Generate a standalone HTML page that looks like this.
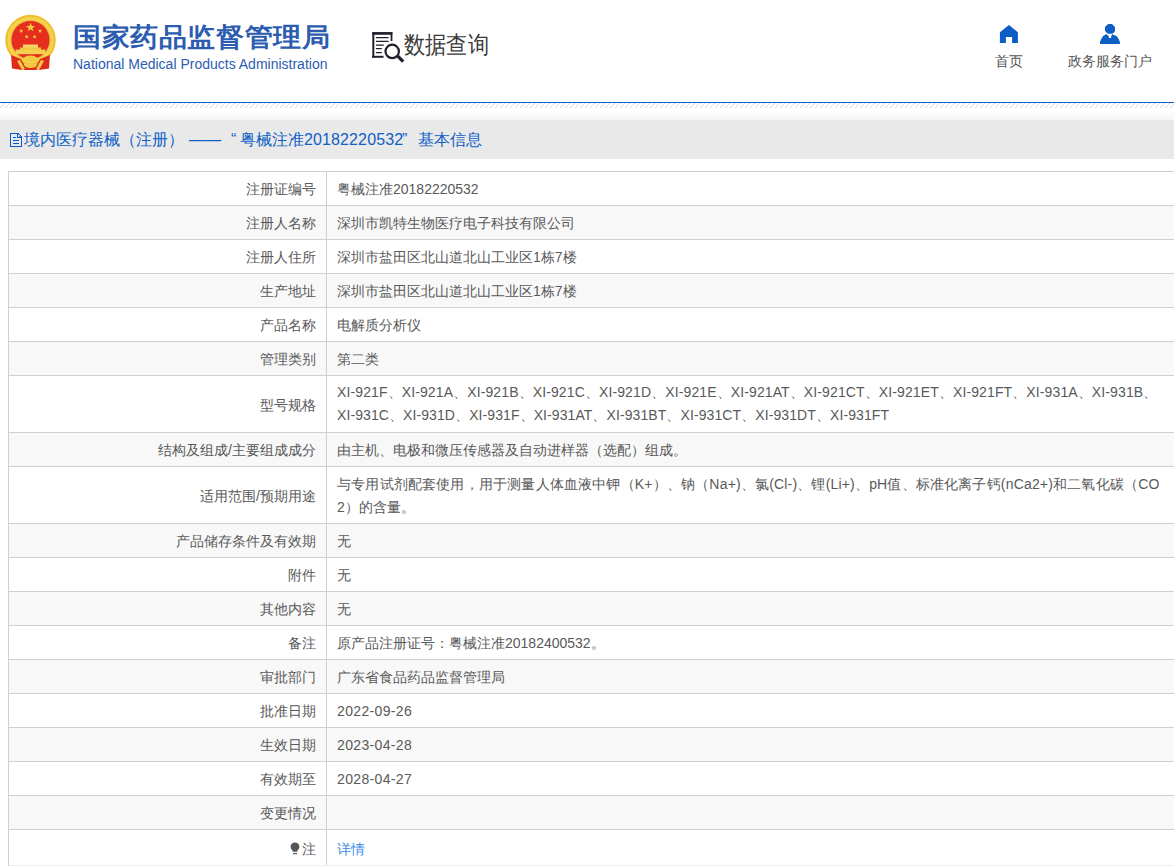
<!DOCTYPE html>
<html><head><meta charset="utf-8">
<style>
*{margin:0;padding:0;box-sizing:border-box}
html,body{width:1174px;height:866px;overflow:hidden;background:#fff}
body{font-family:"Liberation Sans",sans-serif;position:relative}
.abs{position:absolute}
#emblem{left:0;top:10px;width:70px;height:70px}
#t1{left:73px;top:18px;font-size:28px;font-weight:bold;color:#2b5cb0;white-space:nowrap;line-height:38px;letter-spacing:0.6px;transform:scaleY(0.93);transform-origin:0 31px}
#t2{left:73px;top:55px;font-size:14px;color:#2d5db0;white-space:nowrap;line-height:18px}
#dq{left:366px;top:26px;width:44px;height:42px}
#dqt{left:403.5px;top:28px;font-size:24px;color:#3a3a3a;white-space:nowrap;line-height:34px;transform:scaleX(0.885);transform-origin:0 0}
.nav{position:absolute;font-size:14px;color:#555;line-height:20px;white-space:nowrap}
#blue{left:0;top:102px;width:1174px;height:1px;background:#0a61c6}
#hatch{left:0;top:103px;width:1174px;height:5px}
#grad{left:0;top:111px;width:1174px;height:9px;background:linear-gradient(#fff,#f5f5f5)}
#bar{left:0;top:120px;width:1174px;height:39px;background:#e9e9e9;border-bottom:1px solid #e7e9f0}
.bart{top:128px;font-size:16px;color:#0f5fc7;white-space:nowrap;line-height:24px}
#doc{left:10px;top:133px;width:12px;height:14px}
table{position:absolute;left:8px;top:171px;width:1300px;border-collapse:collapse;font-size:14px;color:#595959}
td{border:1px solid #d1cfd1;line-height:23px;padding:6px 10px 4px 10px}
td.l{width:318px;text-align:right;padding-right:10px}
tr:nth-child(even) td{background:#f8f8f8}
a{color:#3a8ee6;text-decoration:none}
tr.last td{padding-top:8px;padding-bottom:6px}
</style></head><body>

<svg id="emblem" class="abs" viewBox="0 10 70 70">
  <circle cx="30.5" cy="40" r="25.2" fill="#f0bd2a"/>
  <circle cx="30.5" cy="40" r="23.2" fill="#f6d24e"/>
  <circle cx="30.5" cy="40" r="20" fill="#e6b83a"/>
  <circle cx="30.5" cy="40" r="19" fill="#e52d20"/>
  <rect x="23" y="44.5" width="15" height="3.5" fill="#f7d566"/>
  <rect x="20" y="47.5" width="21" height="2.5" fill="#f1c640"/>
  <rect x="15.5" y="49.6" width="30" height="4.6" fill="#f4cf52"/>
  <path d="M11 55 L21 59 L25 66 L22 70 L12 68.5 Z" fill="#e02a1c"/>
  <path d="M50 55 L40 59 L36 66 L39 70 L49 68.5 Z" fill="#e02a1c"/>
  <path d="M22 65 L39 65 L37 70 L24 70 Z" fill="#e02a1c"/>
  <ellipse cx="30.5" cy="58.5" rx="7" ry="3" fill="#f3c843"/>
  <ellipse cx="30.5" cy="65.5" rx="6" ry="2.6" fill="#f3c843"/>
  <path d="M17 61 L20 60 L25 69 L22 70 Z M44 61 L41 60 L36 69 L39 70 Z" fill="#f3c843"/>
  <polygon points="30.6,22.5 31.8,25.9 35.3,25.9 32.5,28 33.5,31.3 30.6,29.3 27.7,31.3 28.7,28 25.9,25.9 29.4,25.9" fill="#f2cf3a"/>
  <polygon points="21.2,28.8 21.8,30.3 23.3,30.3 22.1,31.3 22.5,32.8 21.2,31.9 19.9,32.8 20.3,31.3 19.1,30.3 20.6,30.3" fill="#f2cf3a"/>
  <polygon points="40,28.8 40.6,30.3 42.1,30.3 40.9,31.3 41.3,32.8 40,31.9 38.7,32.8 39.1,31.3 37.9,30.3 39.4,30.3" fill="#f2cf3a"/>
  <polygon points="26.7,34.6 27.3,36.1 28.8,36.1 27.6,37.1 28,38.6 26.7,37.7 25.4,38.6 25.8,37.1 24.6,36.1 26.1,36.1" fill="#f2cf3a"/>
  <polygon points="34.6,34.6 35.2,36.1 36.7,36.1 35.5,37.1 35.9,38.6 34.6,37.7 33.3,38.6 33.7,37.1 32.5,36.1 34,36.1" fill="#f2cf3a"/>
</svg>
<div id="t1" class="abs">国家药品监督管理局</div>
<div id="t2" class="abs">National Medical Products Administration</div>

<svg id="dq" class="abs" viewBox="0 0 44 42">
  <path d="M6.3 7.4 H26.4" stroke="#1f1f2e" stroke-width="2.7"/>
  <path d="M7.3 6.3 V31.8" stroke="#1f1f2e" stroke-width="2"/>
  <path d="M25.5 6.3 V15" stroke="#1f1f2e" stroke-width="1.8"/>
  <path d="M6.3 30.8 H17.5" stroke="#1f1f2e" stroke-width="2"/>
  <path d="M9.9 11.6 H22.6 M9.9 15.4 H22.6 M9.9 19.1 H17.7 M9.9 22.7 H15.8 M9.9 26.6 H15.8" stroke="#1f1f2e" stroke-width="1.3"/>
  <circle cx="26.2" cy="25.4" r="6.7" fill="none" stroke="#1f1f2e" stroke-width="2.2"/>
  <path d="M31.8 30.1 L37.2 35.7" stroke="#1f1f2e" stroke-width="3.2"/>
</svg>
<div id="dqt" class="abs">数据查询</div>

<svg class="abs" style="left:990px;top:18px" width="40" height="32" viewBox="0 0 40 32"><path d="M19 6.9 L27.9 14.3 V24.9 H22.1 V18.9 H15.9 V24.9 H9.9 V14.3 Z" fill="#0d5ec4"/></svg>
<div class="nav" style="left:995px;top:51px">首页</div>
<svg class="abs" style="left:1090px;top:18px" width="40" height="32" viewBox="0 0 40 32"><path d="M18.1 5.9 H22 L25 9.1 V12.9 L23.8 14.8 L22 15.7 H18.1 L15.9 13.9 L15 12.2 V9.1 Z" fill="#0d5ec4"/><path d="M16.5 15.9 L18.9 18.5 V20.1 H21.1 V18.5 L22.2 15.9 L23.7 17 L26.6 18.1 L28.8 21.3 L29.9 24 V25.9 H10 V24 L11.1 21.3 L13.1 18.1 Z" fill="#0d5ec4"/></svg>
<div class="nav" style="left:1068px;top:50.5px">政务服务门户</div>

<div id="blue" class="abs"></div>
<svg id="hatch" class="abs" width="1174" height="5">
  <defs><pattern id="hp" width="5" height="5" patternUnits="userSpaceOnUse">
    <rect x="0" y="4" width="1" height="1" fill="#d6d6d6"/>
    <rect x="1" y="3" width="1" height="1" fill="#d6d6d6"/>
    <rect x="2" y="2" width="1" height="1" fill="#d6d6d6"/>
    <rect x="3" y="1" width="1" height="1" fill="#e6e0d8"/>
    <rect x="4" y="0" width="1" height="1" fill="#c8d4e4"/>
  </pattern></defs>
  <rect width="1174" height="5" fill="url(#hp)"/>
</svg>
<div id="grad" class="abs"></div>
<div id="bar" class="abs"></div>
<svg id="doc" class="abs" width="12" height="14" viewBox="0 0 12 14" shape-rendering="crispEdges" fill="#0a5cc8"><rect x="0" y="0" width="1" height="14"/><rect x="11" y="3" width="1" height="11"/><rect x="0" y="0" width="8" height="1"/><rect x="0" y="13" width="12" height="1"/><rect x="8" y="0" width="1" height="1"/><rect x="9" y="1" width="1" height="1"/><rect x="10" y="2" width="1" height="1"/><rect x="7" y="1" width="1" height="4"/><rect x="7" y="4" width="5" height="1"/><rect x="8" y="1" width="1" height="1" opacity="0.6"/><rect x="9" y="3" width="2" height="1" opacity="0.6"/><rect x="3" y="4" width="3" height="1"/><rect x="3" y="7" width="6" height="1"/><rect x="3" y="10" width="6" height="1"/></svg>
<div class="bart abs" style="left:24px">境内医疗器械（注册）</div>
<div class="bart abs" style="left:189px">——</div>
<div class="bart abs" style="left:231px">“</div>
<div class="bart abs" style="left:240px">粤械注准<span style="letter-spacing:0.12px">20182220532</span></div>
<div class="bart abs" style="left:402px">”</div>
<div class="bart abs" style="left:418px">基本信息</div>

<table>
<tr><td class="l">注册证编号</td><td>粤械注准20182220532</td></tr>
<tr><td class="l">注册人名称</td><td>深圳市凯特生物医疗电子科技有限公司</td></tr>
<tr><td class="l">注册人住所</td><td>深圳市盐田区北山道北山工业区1栋7楼</td></tr>
<tr><td class="l">生产地址</td><td>深圳市盐田区北山道北山工业区1栋7楼</td></tr>
<tr><td class="l">产品名称</td><td>电解质分析仪</td></tr>
<tr><td class="l">管理类别</td><td>第二类</td></tr>
<tr><td class="l">型号规格</td><td style="padding:5px 10px 5px 10px"><span style="letter-spacing:0.114px">XI-921F、XI-921A、XI-921B、XI-921C、XI-921D、XI-921E、XI-921AT、XI-921CT、XI-921ET、XI-921FT、XI-931A、XI-931B、</span><br><span style="letter-spacing:0.09px">XI-931C、XI-931D、XI-931F、XI-931AT、XI-931BT、XI-931CT、XI-931DT、XI-931FT</span></td></tr>
<tr><td class="l">结构及组成/主要组成成分</td><td>由主机、电极和微压传感器及自动进样器（选配）组成。</td></tr>
<tr><td class="l">适用范围/预期用途</td><td><span style="letter-spacing:0.18px">与专用试剂配套使用，用于测量人体血液中钾（K+）、钠（Na+)、氯(Cl-)、锂(Li+)、pH值、标准化离子钙(nCa2+)和二氧化碳（CO</span><br>2）的含量。</td></tr>
<tr><td class="l">产品储存条件及有效期</td><td>无</td></tr>
<tr><td class="l">附件</td><td>无</td></tr>
<tr><td class="l">其他内容</td><td>无</td></tr>
<tr><td class="l">备注</td><td>原产品注册证号：粤械注准20182400532。</td></tr>
<tr><td class="l">审批部门</td><td>广东省食品药品监督管理局</td></tr>
<tr><td class="l">批准日期</td><td style="letter-spacing:0.35px">2022-09-26</td></tr>
<tr><td class="l">生效日期</td><td style="letter-spacing:0.35px">2023-04-28</td></tr>
<tr><td class="l">有效期至</td><td style="letter-spacing:0.35px">2028-04-27</td></tr>
<tr><td class="l">变更情况</td><td>&nbsp;</td></tr>
<tr class="last"><td class="l"><svg width="10" height="13" viewBox="0 0 10 13" style="vertical-align:-1px;margin-right:2px"><path d="M5 0.5 C7.6 0.5 9.4 2.3 9.4 4.8 C9.4 6.6 8.3 7.7 7.3 8.8 V9.8 H2.7 V8.8 C1.7 7.7 0.6 6.6 0.6 4.8 C0.6 2.3 2.4 0.5 5 0.5 Z" fill="#555"/><rect x="3" y="11" width="4" height="1.2" fill="#555"/></svg>注</td><td><a>详情</a></td></tr>
</table>
<div class="abs" style="left:9px;top:865px;width:1165px;height:1px;background:#eeeef8"></div>
</body></html>
